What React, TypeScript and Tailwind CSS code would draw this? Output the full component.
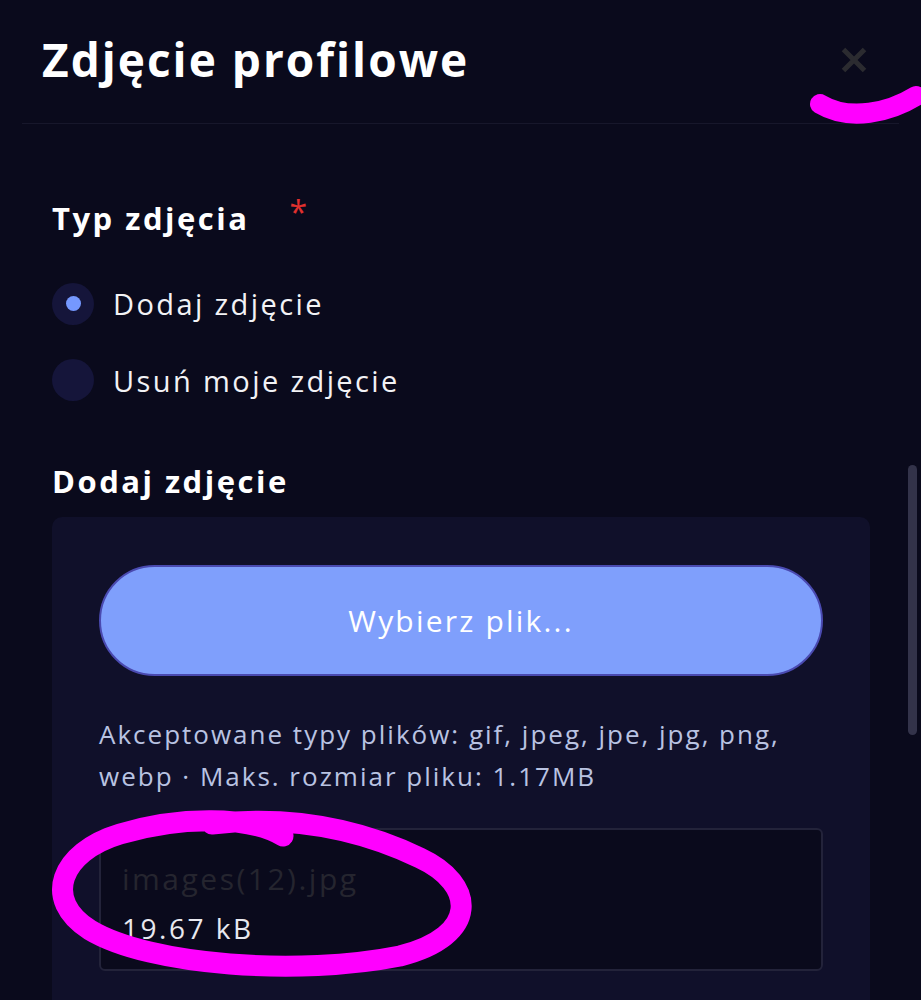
import { useState } from 'react';

const options = [
  { id: 'add', label: 'Dodaj zdjęcie' },
  { id: 'remove', label: 'Usuń moje zdjęcie' },
];

export default function App() {
  const [type, setType] = useState('add');

  return (
    <div
      className="relative h-[1000px] w-[921px] overflow-hidden bg-[#0a0a1c] text-white"
      style={{ fontFamily: '"Open Sans", "Noto Sans", sans-serif' }}
    >
      {/* header */}
      <div className="mx-[22px] flex h-[124px] items-center justify-between border-b border-[#17172b] pl-[20px] pr-[30px] pb-[4px]">
        <h1 className="text-[46px] font-bold tracking-[2px]">Zdjęcie profilowe</h1>
        <button className="text-[#2b2b30]">
          <svg width="30" height="30" viewBox="0 0 24 24" fill="none" stroke="currentColor" strokeWidth="4" strokeLinecap="square">
            <path d="M5 5l14 14M19 5L5 19" />
          </svg>
        </button>
      </div>

      <div className="pl-[52px] pr-[51px]">
        {/* photo type */}
        <div className="mt-[70px] flex items-start">
          <h2 className="text-[31px] font-bold leading-[48px] tracking-[2.5px]">Typ zdjęcia</h2>
          <span className="ml-[40px] mt-[-2px] text-[32px] leading-[40px] text-[#e0302e]">*</span>
        </div>

        <div className="mt-[40px] flex flex-col gap-[33px]">
          {options.map((o) => (
            <label key={o.id} className="flex cursor-pointer items-center gap-[19px]" onClick={() => setType(o.id)}>
              <span className="flex h-[42px] w-[42px] items-center justify-center rounded-full bg-[#15153a]">
                {type === o.id && <span className="h-[15px] w-[15px] rounded-full bg-[#7598ff]" />}
              </span>
              <span className="text-[29px] tracking-[2.4px] text-[#f2f2f5]">{o.label}</span>
            </label>
          ))}
        </div>

        <h2 className="mt-[55px] text-[31px] font-bold leading-[48px] tracking-[2.5px]">Dodaj zdjęcie</h2>

        {/* upload card */}
        <div className="mt-[12px] h-[600px] rounded-[10px] bg-[#10102a] px-[47px] pt-[48px]">
          <button className="flex h-[111px] w-full items-center justify-center rounded-full border-2 border-[#4a4ab0] bg-[#7f9ffc] text-[30px] tracking-[2.2px] text-white">
            Wybierz plik...
          </button>
          <p className="mt-[37px] text-[26px] leading-[42px] tracking-[2px] text-[#b9c3e2]">
            Akceptowane typy plików: gif, jpeg, jpe, jpg, png, webp · Maks. rozmiar pliku: 1.17MB
          </p>
          <div className="mt-[31px] h-[143px] rounded-[6px] border-2 border-[#23233a] bg-[#0a0a1c] px-[21px] pt-[30px]">
            <div className="text-[30px] leading-[38px] tracking-[2.5px] text-[#25252f]">images(12).jpg</div>
            <div className="mt-[11px] text-[28px] leading-[38px] tracking-[2.5px] text-[#e8e8ef]">19.67 kB</div>
          </div>
        </div>
      </div>

      {/* scrollbar */}
      <div className="absolute left-[908px] top-[465px] h-[270px] w-[9px] rounded-full bg-[#33334a]" />

      {/* hand-drawn annotations */}
      <svg className="pointer-events-none absolute inset-0" width="921" height="1000" viewBox="0 0 921 1000" fill="none">
        <path d="M820 104 C850 122 890 112 916 96" stroke="#ff00ff" strokeWidth="20" strokeLinecap="round" />
        <path
          d="M283 836 C250 816 180 816 120 834 C60 852 42 900 90 930 C150 966 300 976 400 956 C480 936 476 884 420 858 C370 834 300 814 212 824"
          stroke="#ff00ff"
          strokeWidth="21"
          strokeLinecap="round"
        />
      </svg>
    </div>
  );
}
